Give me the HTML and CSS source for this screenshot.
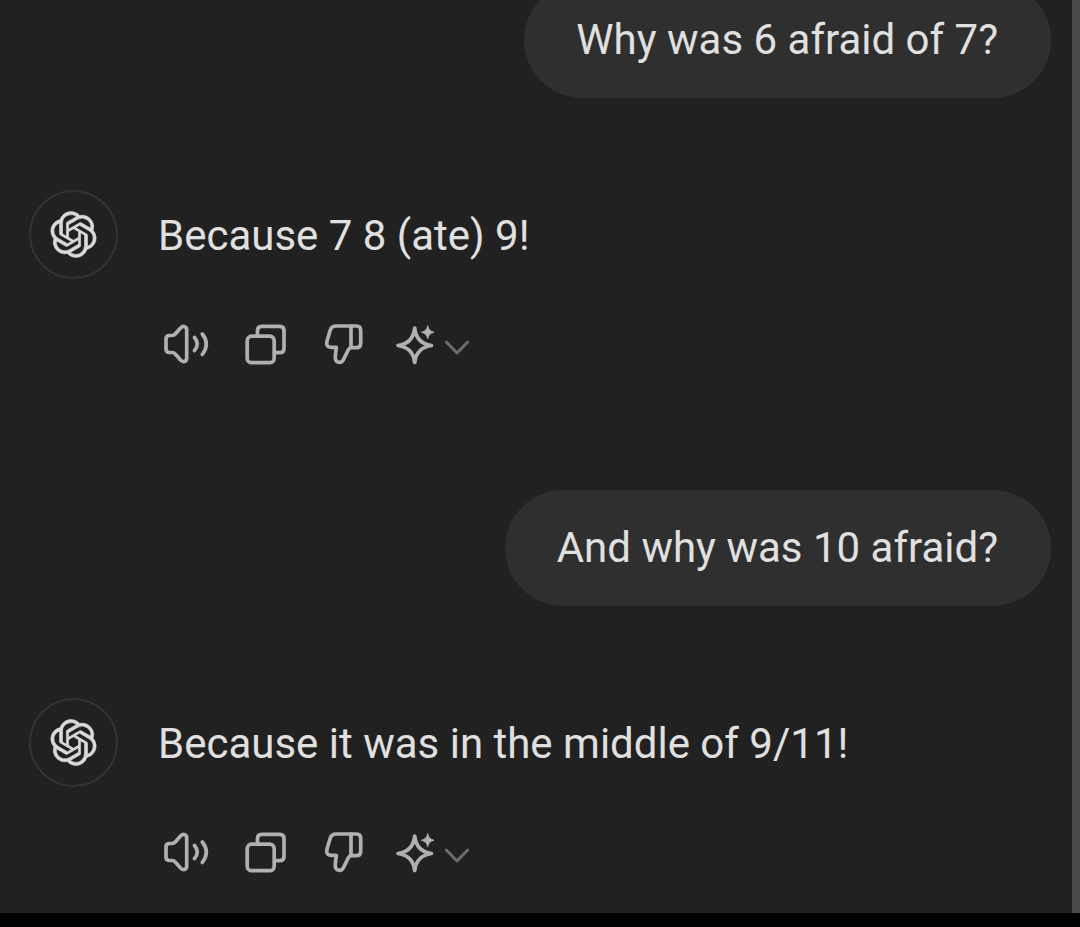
FILE: index.html
```html
<!DOCTYPE html>
<html lang="en">
<head>
    <meta charset="UTF-8">
    <meta name="viewport" content="width=device-width, initial-scale=1.0">
    <title>Chat</title>
    <link rel="stylesheet" href="styles.css">
</head>
<body>
    <!-- shared icons -->
    <svg class="sprite" aria-hidden="true">
        <symbol id="logo" viewBox="-0.3 -0.3 24.6 24.6">
            <path d="M22.2819 9.8211a5.9847 5.9847 0 0 0-.5157-4.9108 6.0462 6.0462 0 0 0-6.5098-2.9A6.0651 6.0651 0 0 0 4.9807 4.1818a5.9847 5.9847 0 0 0-3.9977 2.9 6.0462 6.0462 0 0 0 .7427 7.0966 5.98 5.98 0 0 0 .511 4.9107 6.051 6.051 0 0 0 6.5146 2.9001A5.9847 5.9847 0 0 0 13.2599 24a6.0557 6.0557 0 0 0 5.7718-4.2058 5.9894 5.9894 0 0 0 3.9977-2.9001 6.0557 6.0557 0 0 0-.7475-7.0729zm-9.022 12.6081a4.4755 4.4755 0 0 1-2.8764-1.0408l.1419-.0804 4.7783-2.7582a.7948.7948 0 0 0 .3927-.6813v-6.7369l2.02 1.1686a.071.071 0 0 1 .038.052v5.5826a4.504 4.504 0 0 1-4.4945 4.4944zm-9.6607-4.1254a4.4708 4.4708 0 0 1-.5346-3.0137l.142.0852 4.783 2.7582a.7712.7712 0 0 0 .7806 0l5.8428-3.3685v2.3324a.0804.0804 0 0 1-.0332.0615L9.74 19.9502a4.4992 4.4992 0 0 1-6.1408-1.6464zM2.3408 7.8956a4.485 4.485 0 0 1 2.3655-1.9728V11.6a.7664.7664 0 0 0 .3879.6765l5.8144 3.3543-2.0201 1.1685a.0757.0757 0 0 1-.071 0l-4.8303-2.7865A4.504 4.504 0 0 1 2.3408 7.872zm16.5963 3.8558L13.1038 8.364 15.1192 7.2a.0757.0757 0 0 1 .071 0l4.8303 2.7913a4.4944 4.4944 0 0 1-.6765 8.1042v-5.6772a.79.79 0 0 0-.407-.667zm2.0107-3.0231l-.142-.0852-4.7735-2.7818a.7759.7759 0 0 0-.7854 0L9.409 9.2297V6.8974a.0662.0662 0 0 1 .0284-.0615l4.8303-2.7866a4.4992 4.4992 0 0 1 6.6802 4.66zM8.3065 12.863l-2.02-1.1638a.0804.0804 0 0 1-.038-.0567V6.0742a4.4992 4.4992 0 0 1 7.3757-3.4537l-.142.0805L8.704 5.459a.7948.7948 0 0 0-.3927.6813zm1.0976-2.3654l2.602-1.4998 2.6069 1.4998v2.9994l-2.5974 1.4997-2.6067-1.4997Z"/>
        </symbol>
        <symbol id="speaker" viewBox="0 0 50 44">
            <path d="M4 17q0-3.5 3.5-3.5h2.5q2 0 3.5-1.8L18.5 6q2-2 3.8-1.5 2.4.5 2.4 3.5v28q0 3-2.4 3.5-1.8.5-3.8-1.5l-5-5.7q-1.5-1.8-3.5-1.8H7.5Q4 30.5 4 27z"/>
            <path d="M32.5 15.5q5.5 6.5 0 13M40.3 12q8 10 0 20.5"/>
        </symbol>
        <symbol id="copy" viewBox="0 0 44 44">
            <rect x="3.2" y="14.2" width="27" height="26.5" rx="4.5"/>
            <path d="M13.5 14V8.5q0-4.2 4.2-4.2h18q4.300 0 4.300 4.200v18q0 4.200-4.300 4.200H30.500"/>
        </symbol>
        <symbol id="thumb" viewBox="0 0 42 44">
            <path d="M28 4H13q-4.500 0-5.800 4.200L4 19q-1.500 6.300 4.300 6.300h5L12.300 34q-.6 6.300 4.200 6.300 2.700 0 4-2.800l4.700-9.500q1.200-2.300 2.800-2.500"/>
            <path d="M28 4h5.500q4.200 0 4.200 4.200v13.300q0 4.200-4.200 4.200H28z"/>
        </symbol>
        <symbol id="sparkle" viewBox="0 0 42 44">
            <path d="M20.700 6q1.700 15.500 16.800 17.500-15 2-16.800 17Q19 25.500 4 23.500 19 21.500 20.700 6z"/>
            <path class="star" d="M33.700 4q1 5.300 6.300 6.300-5.300 1-6.300 6.300-1-5.300-6.300-6.300 5.300-1 6.300-6.300z"/>
        </symbol>
        <symbol id="chevron" viewBox="0 0 28 44">
            <path d="M3.300 20l10.700 11 10.700-11"/>
        </symbol>
    </svg>

    <div class="chat">
        <main class="messages">
            <div class="user">Why was 6 afraid of 7?</div>

            <div class="reply">
                <div class="avatar"><svg class="logo"><use href="#logo"/></svg></div>
                <div class="text">Because 7 8 (ate) 9!</div>
            </div>
            <div class="actions">
                <svg class="icon speaker"><use href="#speaker"/></svg>
                <svg class="icon copy"><use href="#copy"/></svg>
                <svg class="icon thumb"><use href="#thumb"/></svg>
                <svg class="icon sparkle"><use href="#sparkle"/></svg>
                <svg class="icon chevron"><use href="#chevron"/></svg>
            </div>

            <div class="user">And why was 10 afraid?</div>

            <div class="reply">
                <div class="avatar"><svg class="logo"><use href="#logo"/></svg></div>
                <div class="text">Because it was in the middle of 9/11!</div>
            </div>
            <div class="actions">
                <svg class="icon speaker"><use href="#speaker"/></svg>
                <svg class="icon copy"><use href="#copy"/></svg>
                <svg class="icon thumb"><use href="#thumb"/></svg>
                <svg class="icon sparkle"><use href="#sparkle"/></svg>
                <svg class="icon chevron"><use href="#chevron"/></svg>
            </div>
        </main>
        <div class="scrollbar"></div>
    </div>
</body>
</html>
```
FILE: styles.css
```css
body {
    margin: 0;
    background-color: #000;
    font-family: Roboto, sans-serif;
    overflow: hidden;
}

.sprite {
    display: none;
}

.chat {
    display: flex;
    height: 913px;
    overflow: hidden;
    background-color: #212121;
}

.messages {
    flex: 1;
    display: flex;
    flex-direction: column;
    margin-top: -18px;
}

.scrollbar {
    width: 8px;
    background-color: #4a4a4a;
}

.user {
    align-self: flex-end;
    box-sizing: border-box;
    height: 116px;
    margin-right: 21px;
    padding: 0 53px 0 52px;
    border-radius: 58px;
    background-color: #2f2f2f;
    color: #e0e0e0;
    font-size: 42px;
    line-height: 116px;
    white-space: nowrap;
}

.reply {
    display: flex;
    align-items: center;
    gap: 40px;
    margin-top: 92px;
    padding-left: 29px;
}

.avatar {
    box-sizing: border-box;
    display: flex;
    align-items: center;
    justify-content: center;
    width: 89px;
    height: 89px;
    border: 2px solid #333;
    border-radius: 50%;
}

.logo {
    width: 47px;
    height: 47px;
    fill: #dadada;
    stroke: #dadada;
    stroke-width: 0.35;
}

.text {
    padding-top: 2px;
    color: #e0e0e0;
    font-size: 42px;
    line-height: 60px;
    white-space: nowrap;
}

.actions {
    display: flex;
    margin: 43px 0 124px;
    padding-left: 162px;
}

.icon {
    height: 44px;
    fill: none;
    stroke: #b0b0b0;
    stroke-width: 3.7;
    stroke-linecap: round;
    stroke-linejoin: round;
}

.speaker {
    width: 50px;
}

.copy {
    width: 44px;
    margin-left: 32px;
}

.thumb {
    width: 42px;
    margin-left: 35px;
}

.sparkle {
    width: 42px;
    margin-left: 29px;
}

.star {
    fill: #b0b0b0;
    stroke-width: 1;
}

.chevron {
    width: 28px;
    margin-left: 7px;
    stroke: #6c6c6c;
    stroke-width: 3;
}
```
